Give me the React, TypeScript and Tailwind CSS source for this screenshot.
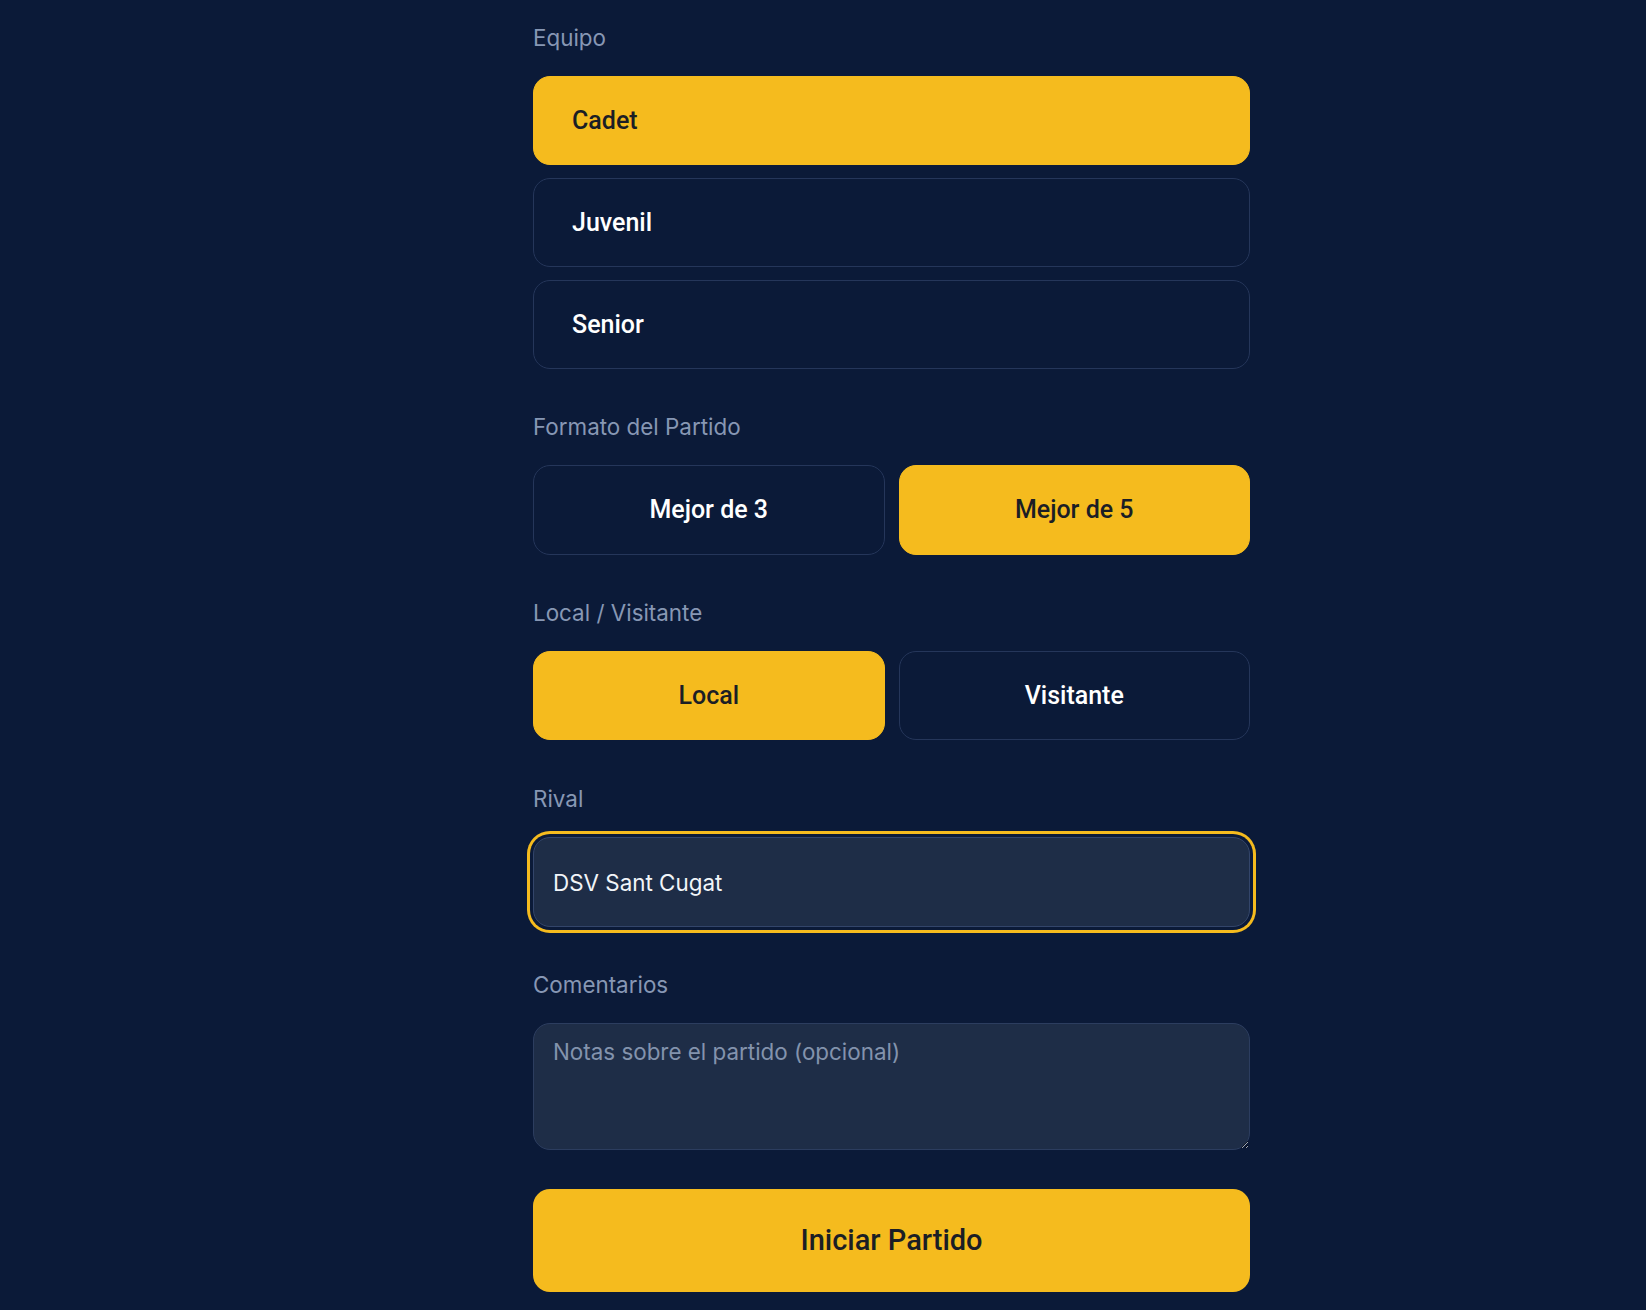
import { useState } from "react";

const teams = ["Cadet", "Juvenil", "Senior"];
const formats = ["Mejor de 3", "Mejor de 5"];
const sides = ["Local", "Visitante"];

const btnFont = { fontFamily: "Roboto, 'Noto Sans', sans-serif" };

function Label({ children }: { children: string }) {
  return (
    <div
      className="h-[34px] leading-[34px] text-[22.4px] text-[#8797b4] mb-[21px]"
      style={{ fontFamily: "Inter, sans-serif" }}
    >
      {children}
    </div>
  );
}

function Choice({
  text,
  active,
  onClick,
  center,
  height,
}: {
  text: string;
  active: boolean;
  onClick: () => void;
  center?: boolean;
  height: string;
}) {
  return (
    <button
      onClick={onClick}
      style={btnFont}
      className={`w-full ${height} rounded-[17px] text-[25px] font-medium flex items-center ${
        center ? "justify-center" : "pl-[38px]"
      } ${
        active
          ? "bg-[#f5bb1e] text-[#1b1e25] border border-[#f5bb1e]"
          : "bg-[#0b1a38] text-white border border-[#25365a]"
      }`}
    >
      {text}
    </button>
  );
}

export default function App() {
  const [team, setTeam] = useState("Cadet");
  const [format, setFormat] = useState("Mejor de 5");
  const [side, setSide] = useState("Local");
  const [rival, setRival] = useState("DSV Sant Cugat");
  const [notes, setNotes] = useState("");

  return (
    <div className="min-h-screen bg-[#0b1a38] pl-[533px] pt-[21px] pb-[18px]">
      <div className="w-[717px]">
        {/* Equipo */}
        <Label>Equipo</Label>
        <div className="flex flex-col gap-[13px]">
          {teams.map((t) => (
            <Choice
              key={t}
              text={t}
              active={team === t}
              onClick={() => setTeam(t)}
              height="h-[89px]"
            />
          ))}
        </div>

        {/* Formato */}
        <div className="mt-[41px]">
          <Label>Formato del Partido</Label>
          <div className="grid grid-cols-2 gap-[14px]">
            {formats.map((f) => (
              <Choice
                key={f}
                text={f}
                active={format === f}
                onClick={() => setFormat(f)}
                center
                height="h-[90px]"
              />
            ))}
          </div>
        </div>

        {/* Local / Visitante */}
        <div className="mt-[41px]">
          <Label>Local / Visitante</Label>
          <div className="grid grid-cols-2 gap-[14px]">
            {sides.map((s) => (
              <Choice
                key={s}
                text={s}
                active={side === s}
                onClick={() => setSide(s)}
                center
                height="h-[89px]"
              />
            ))}
          </div>
        </div>

        {/* Rival */}
        <div className="mt-[42px]">
          <Label>Rival</Label>
          <input
            value={rival}
            onChange={(e) => setRival(e.target.value)}
            style={{ fontFamily: "Inter, sans-serif" }}
            className="w-full h-[90px] rounded-[17px] bg-[#1e2d47] border border-[#33456a] px-[19px] text-[22.4px] text-[#f1f5f9] outline-none ring-[3px] ring-[#f5bb1e] ring-offset-[3px] ring-offset-[#0b1a38]"
          />
        </div>

        {/* Comentarios */}
        <div className="mt-[41px]">
          <Label>Comentarios</Label>
          <textarea
            value={notes}
            onChange={(e) => setNotes(e.target.value)}
            placeholder="Notas sobre el partido (opcional)"
            style={{ fontFamily: "Inter, sans-serif" }}
            className="block w-full h-[127px] rounded-[17px] bg-[#1e2d47] border border-[#2c3d5f] px-[19px] pt-[13px] text-[22.4px] leading-[30px] text-[#f1f5f9] placeholder:text-[#8393ad] outline-none"
          />
        </div>

        <button
          style={btnFont}
          className="mt-[39px] w-full h-[103px] rounded-[17px] bg-[#f5bb1e] text-[#1b1e25] text-[29px] font-medium"
        >
          Iniciar Partido
        </button>
      </div>
    </div>
  );
}
